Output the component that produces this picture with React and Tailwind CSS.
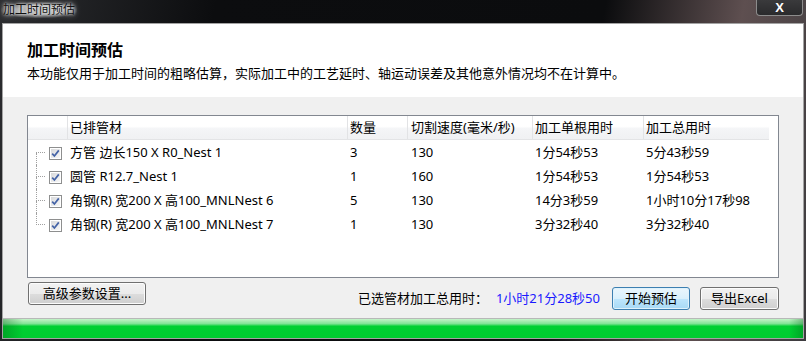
import React from 'react';

const rows = [
  { name: '方管 边长150 X R0_Nest 1', qty: '3', speed: '130', single: '1分54秒53', total: '5分43秒59' },
  { name: '圆管 R12.7_Nest 1', qty: '1', speed: '160', single: '1分54秒53', total: '1分54秒53' },
  { name: '角钢(R) 宽200 X 高100_MNLNest 6', qty: '5', speed: '130', single: '14分3秒59', total: '1小时10分17秒98' },
  { name: '角钢(R) 宽200 X 高100_MNLNest 7', qty: '1', speed: '130', single: '3分32秒40', total: '3分32秒40' },
];

const Check = () => (
  <span className="w-[13px] h-[13px] border border-[#8e8f8f] bg-white p-[1px] flex">
    <span className="flex-1 bg-[linear-gradient(135deg,#d8d9db,#f7f7f7)] flex items-center justify-center">
      <svg width="9" height="9" viewBox="0 0 9 9">
        <path d="M1.2 4.6 L3.4 7 L7.8 1.4" fill="none" stroke="#4463a6" strokeWidth="1.7" />
      </svg>
    </span>
  </span>
);

const App = () => {
  return (
    <div className="w-[806px] h-[341px] flex flex-col bg-[linear-gradient(100deg,#2c2d30_0%,#0c0d0f_25%,#0b0c0e_70%,#5e4f50_86%,#3c3b3e_100%)] font-['Noto_Sans','Noto_Sans_CJK_SC',sans-serif] text-black">
      <div className="h-[23px] flex items-start justify-between shrink-0">
        <span className="ml-[1px] mt-[2px] text-[12px] leading-[16px] text-[#111] bg-[radial-gradient(ellipse_at_center,rgba(190,190,190,0.8)_40%,rgba(120,120,120,0)_75%)] px-[2px] [text-shadow:0_0_6px_#fff,0_0_3px_#fff]">加工时间预估</span>
        <div className="mr-[3px] w-[47px] h-[16px] border border-t-0 border-[#8c8c8c] rounded-b-[4px] bg-[linear-gradient(#3a3a3c,#2a2a2c)] flex items-center justify-center">
          <span className="text-white text-[13px] font-bold leading-none font-['Liberation_Sans',sans-serif]">X</span>
        </div>
      </div>
      <div className="mx-[2px] mb-[2px] flex-1 flex flex-col border border-[#a3a3a3] bg-[#f0f0f0]">
        <div className="h-[73px] bg-white shrink-0 pl-[24px] pt-[15px]">
          <div className="text-[16px] font-bold leading-[22px]">加工时间预估</div>
          <div className="text-[13px] leading-[18px] mt-[3px]">本功能仅用于加工时间的粗略估算，实际加工中的工艺延时、轴运动误差及其他意外情况均不在计算中。</div>
        </div>
        <div className="flex-1 flex flex-col px-[24px] pt-[18px]">
          <div className="h-[163px] border border-[#828790] bg-white text-[13px]">
            <div className="flex h-[24px] w-[741px] border-b border-[#e3e4e6] bg-[linear-gradient(#ffffff_0%,#ffffff_45%,#f4f5f7_55%,#f0f1f3_100%)]">
              <div className="w-[39px]" />
              <div className="w-[280px] border-l border-[#e2e3e5] pl-[2px] flex items-center">已排管材</div>
              <div className="w-[60px] border-l border-[#e2e3e5] pl-[2px] flex items-center">数量</div>
              <div className="w-[125px] border-l border-[#e2e3e5] pl-[3px] flex items-center">切割速度(毫米/秒)</div>
              <div className="w-[111px] border-l border-[#e2e3e5] pl-[2px] flex items-center">加工单根用时</div>
              <div className="w-[126px] border-l border-[#e2e3e5] pl-[2px] flex items-center">加工总用时</div>
            </div>
            <div className="pt-[1px]">
              {rows.map((r, i) => (
                <div key={i} className="flex h-[24px] items-center">
                  <div className="w-[39px] h-full flex items-center">
                    <div className="ml-[8px] w-[9px] h-full flex flex-col">
                      <div className={i === 0 ? 'h-1/2 border-b border-dotted border-[#a0a0a0]' : 'h-1/2 border-b border-l border-dotted border-[#a0a0a0]'} />
                      <div className={i === rows.length - 1 ? 'h-1/2' : 'h-1/2 border-l border-dotted border-[#a0a0a0]'} />
                    </div>
                    <div className="ml-[4px]"><Check /></div>
                  </div>
                  <div className="w-[280px] pl-[3px]">{r.name}</div>
                  <div className="w-[60px] pl-[3px]">{r.qty}</div>
                  <div className="w-[125px] pl-[4px]">{r.speed}</div>
                  <div className="w-[111px] pl-[3px]">{r.single}</div>
                  <div className="w-[126px] pl-[3px]">{r.total}</div>
                </div>
              ))}
            </div>
          </div>
          <div className="flex items-start mt-[4px] text-[13px]">
            <button className="w-[118px] h-[23px] ml-[1px] border border-[#707070] rounded-[3px] bg-[linear-gradient(#f2f2f2_0%,#ebebeb_50%,#dddddd_51%,#cfcfcf_100%)] shadow-[inset_0_0_0_1px_#fcfcfc] leading-none">高级参数设置...</button>
            <div className="ml-auto mt-[5px] flex items-center">
              <span>已选管材加工总用时：</span>
              <span className="ml-[8px] text-[#1a1aff]">1小时21分28秒50</span>
              <button className="ml-[12px] w-[78px] h-[23px] border border-[#3c7fb1] rounded-[3px] bg-[linear-gradient(#eaf6fd_0%,#d9f0fc_50%,#bee6fd_51%,#a7d9f5_100%)] shadow-[inset_0_0_0_1px_#dff2fc] leading-none">开始预估</button>
              <button className="ml-[10px] w-[79px] h-[23px] border border-[#707070] rounded-[3px] bg-[linear-gradient(#f2f2f2_0%,#ebebeb_50%,#dddddd_51%,#cfcfcf_100%)] shadow-[inset_0_0_0_1px_#fcfcfc] leading-none">导出Excel</button>
            </div>
          </div>
          <div className="flex-1" />
        </div>
        <div className="h-[20px] shrink-0 border-t border-[#b8b8b8] bg-[linear-gradient(#c4f3c8_0%,#7fe495_25%,#00d032_38%,#00cc30_100%)] flex">
          <div className="w-[20px] h-full bg-[linear-gradient(90deg,rgba(0,90,20,0.35),rgba(0,90,20,0))]" />
          <div className="flex-1" />
          <div className="w-[14px] h-full bg-[linear-gradient(270deg,rgba(0,90,20,0.35),rgba(0,90,20,0))]" />
        </div>
      </div>
    </div>
  );
};

export default App;
